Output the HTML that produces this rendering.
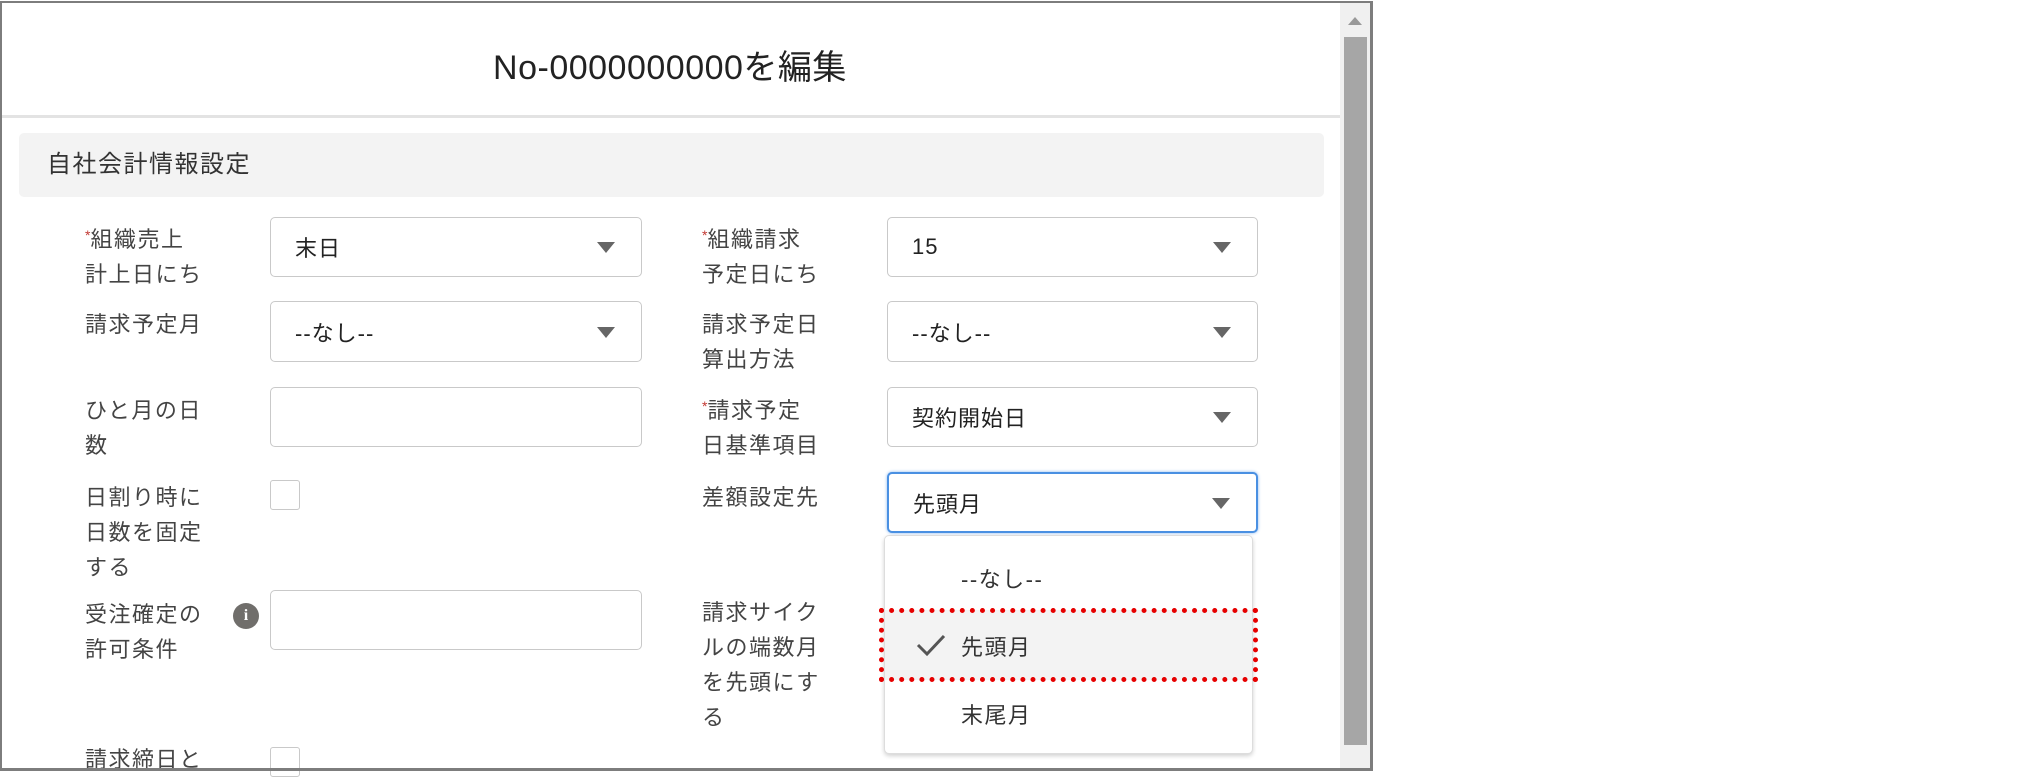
<!DOCTYPE html>
<html><head><meta charset="utf-8"><style>
*{box-sizing:border-box;margin:0;padding:0}
body{width:2027px;height:777px;background:#fff;position:relative;overflow:hidden;font-family:"Liberation Sans","Noto Sans CJK JP",sans-serif;color:#3e3e3c}
.a{position:absolute}
.frame{left:0;top:1px;width:1373px;height:770px;border:2px solid #7d7d7d;border-right-width:3px;border-bottom-width:3px;z-index:5}
.title{left:0;width:1340px;top:40px;text-align:center;font-size:34px;color:#222;letter-spacing:0.5px}
.lbl{font-size:22px;line-height:35px;color:#444;letter-spacing:1.5px}
.req{color:#c23934;font-size:14px;vertical-align:top;position:relative;top:-4px;letter-spacing:0}
.box{border:1.5px solid #c9c9c9;border-radius:5px;background:#fff;font-size:22px;color:#222;padding-left:24px;display:flex;align-items:center;letter-spacing:1px}
.tri{position:absolute;right:26px;top:50%;margin-top:-5px;width:0;height:0;border-left:9px solid transparent;border-right:9px solid transparent;border-top:11px solid #666}
.cb{width:30px;height:30px;border:1.5px solid #c9c9c9;border-radius:3px}
.it{font-size:22px;color:#333;letter-spacing:1.5px}
</style></head><body>
<div class="a frame"></div>
<div class="a" style="left:1340px;top:3px;width:30px;height:766px;background:#f0f0f0"></div>
<div class="a" style="left:1344px;top:37px;width:23px;height:708px;background:#a6a6a6"></div>
<div class="a" style="left:1348px;top:17px;width:0;height:0;border-left:7px solid transparent;border-right:7px solid transparent;border-bottom:8px solid #999"></div>
<div class="a title">No-0000000000を編集</div>
<div class="a" style="left:2px;top:115px;width:1338px;height:3px;background:#e3e3e3"></div>
<div class="a" style="left:19px;top:133px;width:1305px;height:64px;background:#f3f3f3;border-radius:5px;font-size:24px;line-height:64px;padding-left:28px;color:#333;letter-spacing:1.5px">自社会計情報設定</div>

<div class="a lbl" style="left:85px;top:222px"><span class="req">*</span>組織売上<br>計上日にち</div>
<div class="a box" style="left:270px;top:217px;width:372px;height:60px">末日<i class="tri"></i></div>
<div class="a lbl" style="left:85px;top:307px">請求予定月</div>
<div class="a box" style="left:270px;top:301px;width:372px;height:61px">--なし--<i class="tri"></i></div>
<div class="a lbl" style="left:85px;top:393px">ひと月の日<br>数</div>
<div class="a box" style="left:270px;top:387px;width:372px;height:60px"></div>
<div class="a lbl" style="left:85px;top:480px">日割り時に<br>日数を固定<br>する</div>
<div class="a cb" style="left:270px;top:480px"></div>
<div class="a lbl" style="left:85px;top:597px">受注確定の<br>許可条件</div>
<div class="a" style="left:233px;top:603px;width:26px;height:26px;border-radius:50%;background:#706e6b;color:#fff;font-size:16px;font-weight:bold;text-align:center;line-height:26px;font-family:'Liberation Serif',serif">i</div>
<div class="a box" style="left:270px;top:590px;width:372px;height:60px"></div>
<div class="a lbl" style="left:85px;top:742px">請求締日と</div>
<div class="a cb" style="left:270px;top:747px"></div>

<div class="a lbl" style="left:702px;top:222px"><span class="req">*</span>組織請求<br>予定日にち</div>
<div class="a box" style="left:887px;top:217px;width:371px;height:60px">15<i class="tri"></i></div>
<div class="a lbl" style="left:702px;top:307px">請求予定日<br>算出方法</div>
<div class="a box" style="left:887px;top:301px;width:371px;height:61px">--なし--<i class="tri"></i></div>
<div class="a lbl" style="left:702px;top:393px"><span class="req">*</span>請求予定<br>日基準項目</div>
<div class="a box" style="left:887px;top:387px;width:371px;height:60px">契約開始日<i class="tri"></i></div>
<div class="a lbl" style="left:702px;top:480px">差額設定先</div>
<div class="a box" style="left:887px;top:472px;width:371px;height:61px;border:2px solid #4a90e2;box-shadow:0 0 3px #8ab8f0">先頭月<i class="tri"></i></div>
<div class="a lbl" style="left:702px;top:595px">請求サイク<br>ルの端数月<br>を先頭にす<br>る</div>

<div class="a" style="left:884px;top:535px;width:369px;height:219px;background:#fff;border:1px solid #ddd;border-radius:5px;box-shadow:0 2px 4px rgba(0,0,0,.18)"></div>
<div class="a it" style="left:961px;top:562px">--なし--</div>
<div class="a" style="left:885px;top:610px;width:367px;height:70px;background:#f3f3f3"></div>
<svg class="a" style="left:915px;top:632px" width="32" height="26" viewBox="0 0 32 26"><path d="M3 13 L12 22 L29 4" fill="none" stroke="#555" stroke-width="3"/></svg>
<div class="a it" style="left:961px;top:630px">先頭月</div>
<div class="a it" style="left:961px;top:698px">末尾月</div>
<div class="a" style="left:879px;top:608px;width:379px;height:74px;border:5px dotted #e60000"></div>
</body></html>
